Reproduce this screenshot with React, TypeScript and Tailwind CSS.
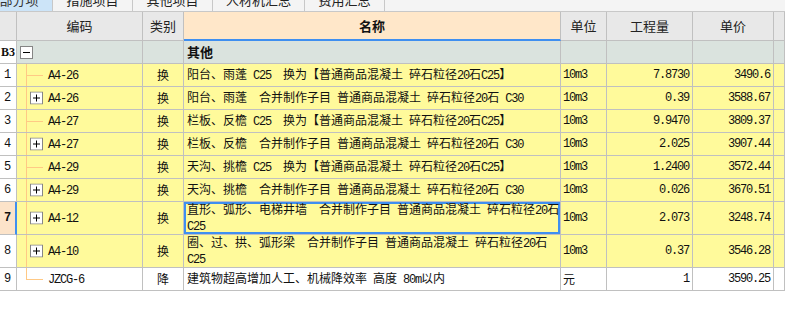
import React from "react";

type Item = {
  no: string;
  code: string;
  kind: string;
  name: string[];
  unit: string;
  qty: string;
  price: string;
  plus?: boolean;
  last?: boolean;
  tall?: boolean;
  active?: boolean;
  white?: boolean;
};

const rows: Item[] = [
  { no: "1", code: "A4-26", kind: "换", name: ["阳台、雨蓬 C25  换为【普通商品混凝土 碎石粒径20石C25】"], unit: "10m3", qty: "7.8730", price: "3490.6" },
  { no: "2", code: "A4-26", kind: "换", name: ["阳台、雨蓬  合并制作子目 普通商品混凝土 碎石粒径20石 C30"], unit: "10m3", qty: "0.39", price: "3588.67", plus: true },
  { no: "3", code: "A4-27", kind: "换", name: ["栏板、反檐 C25  换为【普通商品混凝土 碎石粒径20石C25】"], unit: "10m3", qty: "9.9470", price: "3809.37" },
  { no: "4", code: "A4-27", kind: "换", name: ["栏板、反檐  合并制作子目 普通商品混凝土 碎石粒径20石 C30"], unit: "10m3", qty: "2.025", price: "3907.44", plus: true },
  { no: "5", code: "A4-29", kind: "换", name: ["天沟、挑檐 C25  换为【普通商品混凝土 碎石粒径20石C25】"], unit: "10m3", qty: "1.2400", price: "3572.44" },
  { no: "6", code: "A4-29", kind: "换", name: ["天沟、挑檐  合并制作子目 普通商品混凝土 碎石粒径20石 C30"], unit: "10m3", qty: "0.026", price: "3670.51", plus: true },
  { no: "7", code: "A4-12", kind: "换", name: ["直形、弧形、电梯井墙  合并制作子目 普通商品混凝土 碎石粒径20石", "C25"], unit: "10m3", qty: "2.073", price: "3248.74", plus: true, tall: true, active: true },
  { no: "8", code: "A4-10", kind: "换", name: ["圈、过、拱、弧形梁  合并制作子目 普通商品混凝土 碎石粒径20石", "C25"], unit: "10m3", qty: "0.37", price: "3546.28", plus: true, tall: true },
  { no: "9", code: "JZCG-6", kind: "降", name: ["建筑物超高增加人工、机械降效率 高度 80m以内"], unit: "元", qty: "1", price: "3590.25", last: true, white: true },
];

// ascii runs get a half-width mono face, like the original song-ti grid
function T({ s }: { s: string }) {
  const parts = s.split(/([\x20-\x7e]+)/);
  return (
    <>
      {parts.map((p, i) =>
        /^[\x20-\x7e]+$/.test(p) ? (
          <span key={i} className="font-['Liberation_Mono',monospace] tracking-[-1.2px]">
            {p}
          </span>
        ) : (
          <span key={i}>{p}</span>
        )
      )}
    </>
  );
}

function PlusBox({ minus }: { minus?: boolean }) {
  return (
    <svg width="13" height="13" viewBox="0 0 13 13" className="block">
      <rect x="0.5" y="0.5" width="12" height="12" fill="#fff" stroke="#858585" />
      <line x1="3" y1="6.5" x2="10" y2="6.5" stroke="#000" />
      {!minus && <line x1="6.5" y1="3" x2="6.5" y2="10" stroke="#000" />}
    </svg>
  );
}

function Tabs() {
  const tabs = ["措施项目", "其他项目", "人材机汇总", "费用汇总"];
  return (
    <div className="flex h-[12px] overflow-hidden border-b border-[#c8c8c8] bg-[#f4f4f4]">
      <div className="-ml-[27px] w-[80px] shrink-0 border-r border-[#c8c8c8] bg-[#cce4f8]">
        <div className="-mt-[11px] flex h-[22px] items-center justify-center text-[13px] text-[#333]">分部分项</div>
      </div>
      {tabs.map((t, i) => (
        <div key={t} className={`${i === 2 ? "w-[92px]" : "w-[80px]"} shrink-0 border-r border-[#c8c8c8]`}>
          <div className="-mt-[11px] flex h-[22px] items-center justify-center text-[13px] text-[#222]">{t}</div>
        </div>
      ))}
    </div>
  );
}

function Header() {
  const cell = "flex h-full shrink-0 items-center justify-center border-r border-b border-[#c0c0c0] bg-[#e8e8e8] text-[13px] text-[#222]";
  return (
    <div className="flex h-[29px]">
      <div className={`${cell} w-[17px]`} />
      <div className={`${cell} w-[126px]`}>编码</div>
      <div className={`${cell} w-[41px]`}>类别</div>
      <div className="flex h-full w-[377px] shrink-0 items-center justify-center border-r border-b-2 border-r-[#c0c0c0] border-b-[#3f8ff0] bg-[#ffe7c9] text-[13px] font-bold text-[#111]">名称</div>
      <div className={`${cell} w-[46px]`}>单位</div>
      <div className={`${cell} w-[86px]`}>工程量</div>
      <div className={`${cell} w-[81px]`}>单价</div>
      <div className={`${cell} flex-1`} />
    </div>
  );
}

function GroupRow() {
  const cell = "h-full shrink-0 border-r border-b border-[#c0c0c0] bg-[#dae3de]";
  return (
    <div className="flex h-[23px]">
      <div className="flex h-full w-[17px] shrink-0 items-center border-r border-b border-[#c0c0c0] bg-white pl-px font-['Liberation_Serif',serif] text-[12px] font-bold">B3</div>
      <div className={`${cell} flex w-[126px] items-center pl-[3px]`}>
        <PlusBox minus />
      </div>
      <div className={`${cell} w-[41px]`} />
      <div className={`${cell} flex w-[377px] items-center pl-[3px] text-[13px] font-bold`}>其他</div>
      <div className={`${cell} w-[46px]`} />
      <div className={`${cell} w-[86px]`} />
      <div className={`${cell} w-[81px]`} />
      <div className={`${cell} flex-1`} />
    </div>
  );
}

function DataRow({ r }: { r: Item }) {
  const bg = r.white ? "bg-white" : "bg-[#fffa9b]";
  const cell = `h-full shrink-0 border-r border-b border-[#c0c0c0] ${bg}`;
  return (
    <div className={`flex ${r.tall ? "h-[33px]" : "h-[23px]"}`}>
      <div
        className={`flex h-full w-[17px] shrink-0 items-center border-b border-[#c0c0c0] pl-[4px] ${
          r.active ? "border-r-2 border-r-[#3f8ff0] bg-[#fce3c9] font-bold" : "border-r bg-white"
        }`}
      >
        <T s={r.no} />
      </div>
      <div className={`${cell} flex w-[126px] items-stretch`}>
        <div className="w-[9px] shrink-0" />
        <div className="relative w-[17px] shrink-0">
          <div className={`absolute left-0 top-0 w-px bg-[#ffc985] ${r.last ? "h-1/2" : "h-full"}`} />
          {r.plus ? (
            <div className="absolute left-[4px] top-1/2 -translate-y-1/2">
              <PlusBox />
            </div>
          ) : (
            <div className="absolute left-0 top-1/2 h-px w-[17px] bg-[#ffc985]" />
          )}
        </div>
        <div className="ml-[5px] self-center">
          <T s={r.code} />
        </div>
      </div>
      <div className={`${cell} flex w-[41px] items-center justify-center`}>{r.kind}</div>
      <div
        className={`${cell} flex w-[377px] flex-col justify-center whitespace-pre pl-[3px] leading-[14px] ${
          r.active ? "shadow-[inset_0_0_0_2px_#3f8ff0]" : ""
        }`}
      >
        {r.name.map((l, i) => (
          <div key={i}>
            <T s={l} />
          </div>
        ))}
      </div>
      <div className={`${cell} flex w-[46px] items-center pl-[2px]`}>
        <T s={r.unit} />
      </div>
      <div className={`${cell} flex w-[86px] items-center justify-end pr-[3px]`}>
        <T s={r.qty} />
      </div>
      <div className={`${cell} flex w-[81px] items-center justify-end pr-[3px]`}>
        <T s={r.price} />
      </div>
      <div className={`${cell} flex-1`} />
    </div>
  );
}

export default function App() {
  return (
    <div className="h-[326px] w-[785px] overflow-hidden bg-white font-['Noto_Sans_CJK_SC',sans-serif] text-[12px] text-[#111]">
      <Tabs />
      <Header />
      <GroupRow />
      {rows.map((r) => (
        <DataRow key={r.no} r={r} />
      ))}
    </div>
  );
}
